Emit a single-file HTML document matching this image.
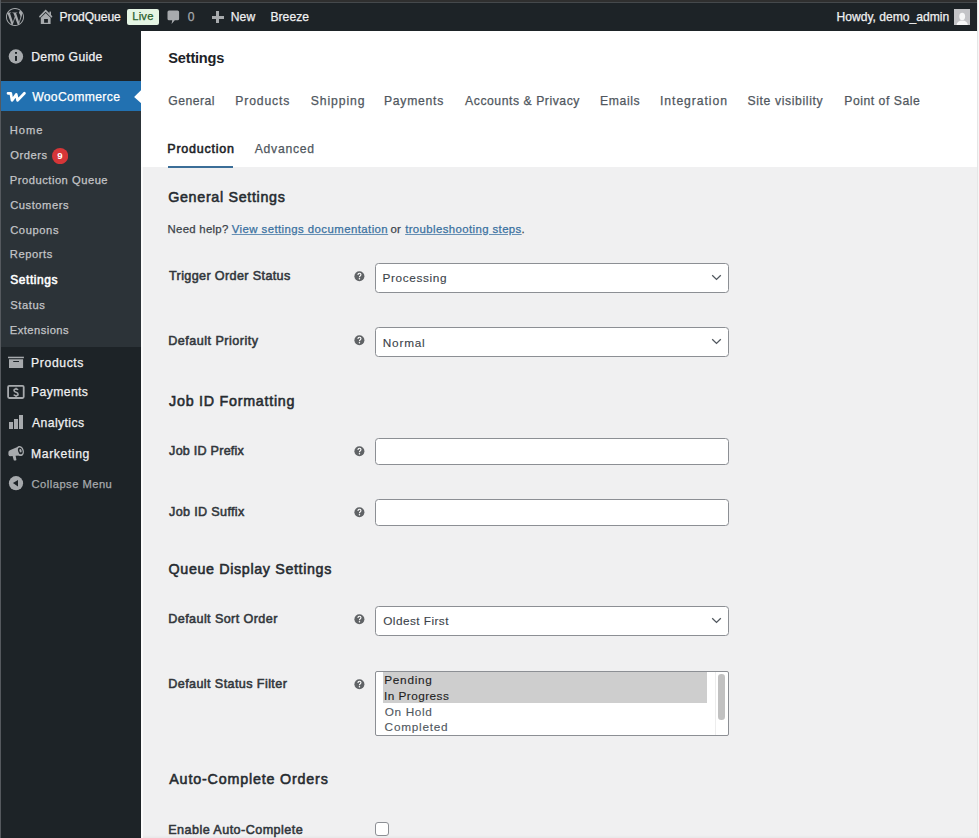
<!DOCTYPE html>
<html><head><meta charset="utf-8"><title>Settings &lsaquo; ProdQueue &mdash; WooCommerce</title>
<style>
html,body{margin:0;padding:0;width:979px;height:838px;overflow:hidden;background:#f0f0f1}
body{position:relative;font-family:"Liberation Sans",sans-serif}
.r{position:absolute;display:block}
.t{position:absolute;white-space:nowrap;line-height:1;font-family:"Liberation Sans",sans-serif;-webkit-text-stroke:0.25px currentColor}
</style></head><body>
<div class="r" style="left:0px;top:0px;width:979px;height:838px;background:#f0f0f1"></div>
<div class="r" style="left:141px;top:31px;width:836px;height:136px;background:#fff"></div>
<div class="r" style="left:0px;top:31px;width:141px;height:807px;background:#1d2327"></div>
<div class="r" style="left:0px;top:0px;width:979px;height:31px;background:#1d2327"></div>
<div class="r" style="left:0px;top:0px;width:979px;height:2px;background:#2f2f2f"></div>
<div class="r" style="left:0px;top:2px;width:979px;height:1px;background:#45494c"></div>
<div class="r" style="left:0px;top:0px;width:1px;height:838px;background:#55595e"></div>
<div class="r" style="left:977px;top:0px;width:1px;height:838px;background:#e6e6e6"></div>
<div class="r" style="left:978px;top:0px;width:1px;height:838px;background:#f7f7f7"></div>
<div class="r" style="left:0px;top:835px;width:979px;height:3px;background:linear-gradient(rgba(0,0,0,0),rgba(0,0,0,0.035))"></div>
<div class="r" style="left:141px;top:167px;width:2px;height:671px;background:#fbfbfb"></div>
<svg class="r" style="left:6px;top:8px" width="18" height="18" viewBox="0 0 24 24">
<path fill="#a7aaad" d="M21.469 6.825c.84 1.537 1.318 3.3 1.318 5.175 0 3.979-2.156 7.456-5.363 9.325l3.295-9.527c.615-1.54.82-2.771.82-3.864 0-.405-.026-.78-.07-1.11m-7.981.105c.647-.03 1.232-.105 1.232-.105.582-.075.514-.93-.067-.899 0 0-1.755.135-2.88.135-1.064 0-2.85-.15-2.85-.15-.585-.03-.661.855-.075.885 0 0 .54.061 1.125.09l1.68 4.605-2.37 7.08L5.354 6.9c.649-.03 1.234-.1 1.234-.1.585-.075.516-.93-.065-.896 0 0-1.746.138-2.874.138-.2 0-.438-.008-.69-.015C4.911 3.15 8.235 1.215 12 1.215c2.809 0 5.365 1.072 7.286 2.833-.046-.003-.091-.009-.141-.009-1.06 0-1.812.923-1.812 1.914 0 .89.513 1.643 1.06 2.531.411.72.89 1.643.89 2.977 0 .915-.354 1.994-.821 3.479l-1.075 3.585-3.9-11.61.001.014zM12 22.784c-1.059 0-2.081-.153-3.048-.437l3.237-9.406 3.315 9.087c.024.053.05.101.078.149-1.12.393-2.325.609-3.582.609M1.211 12c0-1.564.336-3.05.935-4.39L7.29 21.709C3.694 19.96 1.212 16.271 1.211 12M12 0C5.385 0 0 5.385 0 12s5.385 12 12 12 12-5.385 12-12S18.615 0 12 0"/>
</svg>
<svg class="r" style="left:38px;top:8px" width="16" height="18" viewBox="0 0 16 18">
<path d="M1.9 8.6 L7.7 2.6 L13.5 8.6" fill="none" stroke="#a7aaad" stroke-width="1.6" stroke-linecap="round"/>
<rect x="11.4" y="3.6" width="1.6" height="3.6" fill="#a7aaad"/>
<path d="M2.8 9.8 L7.7 5.0 L12.6 9.8 L12.6 16 L2.8 16 Z M6.1 11.0 L9.9 11.0 L9.9 14.7 L6.1 14.7 Z" fill="#a7aaad" fill-rule="evenodd"/>
</svg>
<div class="t" style="left:59.50px;top:11.20px;font-size:12.1px;color:#f0f0f1;letter-spacing:-0.069px;">ProdQueue</div>
<div class="r" style="left:127.2px;top:8.9px;width:31.9px;height:16.1px;background:#e5f5e4;border-radius:2px"></div>
<div class="t" style="left:132.28px;top:11.00px;font-size:11.2px;color:#2a5f2c;letter-spacing:0.192px;">Live</div>
<svg class="r" style="left:166px;top:9px" width="16" height="17" viewBox="0 0 16 17">
<path d="M3.0 1.6 L11.6 1.6 Q13.1 1.6 13.1 3.1 L13.1 9.8 Q13.1 11.3 11.6 11.3 L8.8 11.3 L5.6 15.0 L6.2 11.3 L3.0 11.3 Q1.5 11.3 1.5 9.8 L1.5 3.1 Q1.5 1.6 3.0 1.6 Z" fill="#a7aaad"/>
</svg>
<div class="t" style="left:187.82px;top:11.10px;font-size:12.1px;color:#a7aaad;">0</div>
<div class="r" style="left:211.7px;top:16.1px;width:12.1px;height:2.8px;background:#a7aaad"></div>
<div class="r" style="left:216.2px;top:11.0px;width:2.9px;height:12.0px;background:#a7aaad"></div>
<div class="t" style="left:230.70px;top:11.20px;font-size:12.1px;color:#f0f0f1;letter-spacing:0.184px;">New</div>
<div class="t" style="left:270.40px;top:11.20px;font-size:12.1px;color:#f0f0f1;letter-spacing:0.057px;">Breeze</div>
<div class="t" style="left:836.60px;top:11.30px;font-size:12.1px;color:#f0f0f1;letter-spacing:-0.012px;">Howdy, demo_admin</div>
<svg class="r" style="left:954px;top:9px" width="16" height="16" viewBox="0 0 16 16">
<rect width="16" height="16" fill="#c3c4c7"/>
<ellipse cx="8.2" cy="7.4" rx="2.9" ry="3.6" fill="#f6f7f7"/>
<path d="M2.5 16 Q3.2 11.8 8.2 11.6 Q13.2 11.8 13.9 16 Z" fill="#f6f7f7"/>
</svg>
<svg class="r" style="left:8px;top:49px" width="16" height="16" viewBox="0 0 16 16">
<circle cx="7.9" cy="7.5" r="7.2" fill="#a7aaad"/>
<rect x="7.0" y="3.0" width="2" height="1.8" fill="#1d2327"/>
<rect x="7.0" y="7.0" width="2" height="4.9" fill="#1d2327"/>
</svg>
<div class="t" style="left:31.19px;top:50.60px;font-size:12.2px;color:#f0f0f1;letter-spacing:0.306px;">Demo Guide</div>
<div class="r" style="left:1px;top:81px;width:140px;height:30px;background:#2271b1"></div>
<svg class="r" style="left:6px;top:90px" width="20" height="14" viewBox="0 0 20 14">
<path d="M2.0 3.3 L4.8 3.3 L6.0 10.4 L10.2 4.4 L11.6 10.4 L18.4 3.2" fill="none" stroke="#fff" stroke-width="2.7" stroke-linejoin="round" stroke-linecap="round"/>
</svg>
<div class="t" style="left:32.14px;top:91.20px;font-size:12.2px;color:#fff;letter-spacing:0.336px;">WooCommerce</div>
<svg class="r" style="left:133px;top:88px" width="9" height="17" viewBox="0 0 9 17"><path d="M9 1.2 L1.1 8.9 L9 16 Z" fill="#fff"/></svg>
<div class="r" style="left:1px;top:111px;width:140px;height:236px;background:#2c3338"></div>
<div class="t" style="left:9.78px;top:124.70px;font-size:11.2px;color:#c3c4c7;letter-spacing:0.975px;">Home</div>
<div class="t" style="left:10.17px;top:150.30px;font-size:11.2px;color:#c3c4c7;letter-spacing:0.542px;">Orders</div>
<svg class="r" style="left:52px;top:147.7px" width="16.2" height="16.2" viewBox="0 0 16 16"><circle cx="8" cy="8" r="8" fill="#d63638"/></svg>
<div class="t" style="left:57.36px;top:151.40px;font-size:9.6px;color:#fff;font-weight:700;-webkit-text-stroke:0;">9</div>
<div class="t" style="left:9.78px;top:175.30px;font-size:11.2px;color:#c3c4c7;letter-spacing:0.509px;">Production Queue</div>
<div class="t" style="left:10.14px;top:199.80px;font-size:11.2px;color:#c3c4c7;letter-spacing:0.538px;">Customers</div>
<div class="t" style="left:10.14px;top:224.90px;font-size:11.2px;color:#c3c4c7;letter-spacing:0.604px;">Coupons</div>
<div class="t" style="left:9.78px;top:249.40px;font-size:11.2px;color:#c3c4c7;letter-spacing:0.565px;">Reports</div>
<div class="t" style="left:10.16px;top:275.00px;font-size:11.97px;color:#fff;-webkit-text-stroke:0.55px currentColor;letter-spacing:0.588px;">Settings</div>
<div class="t" style="left:10.20px;top:299.90px;font-size:11.2px;color:#c3c4c7;letter-spacing:0.589px;">Status</div>
<div class="t" style="left:9.78px;top:324.70px;font-size:11.2px;color:#c3c4c7;letter-spacing:0.458px;">Extensions</div>
<svg class="r" style="left:7px;top:355px" width="18" height="14" viewBox="0 0 18 14">
<rect x="1" y="1.7" width="15.9" height="1.5" fill="#a7aaad"/>
<path d="M2 4.3 L16.1 4.3 L16.1 12.9 L2 12.9 Z M6.2 6.0 L12 6.0 L12 7.0 L6.2 7.0 Z" fill="#a7aaad" fill-rule="evenodd"/>
</svg>
<div class="t" style="left:31.09px;top:356.50px;font-size:12.2px;color:#f0f0f1;letter-spacing:0.611px;">Products</div>
<svg class="r" style="left:6px;top:384px" width="20" height="16" viewBox="0 0 20 16">
<rect x="2.1" y="1.8" width="15.6" height="12.2" rx="1.2" fill="none" stroke="#a7aaad" stroke-width="1.8"/>
<path d="M12.0 6.0 Q11.5 5.0 10.0 5.0 Q8.0 5.0 8.0 6.6 Q8.0 7.9 10.0 8.2 Q12.1 8.6 12.1 10.2 Q12.1 11.7 10.0 11.7 Q8.4 11.7 7.8 10.7 M10.05 3.7 V5.0 M10.05 11.7 V13.0" fill="none" stroke="#a7aaad" stroke-width="1.5"/>
</svg>
<div class="t" style="left:31.09px;top:386.40px;font-size:12.2px;color:#f0f0f1;letter-spacing:0.382px;">Payments</div>
<div class="r" style="left:8.9px;top:421.9px;width:3.7px;height:7.2px;background:#a7aaad"></div>
<div class="r" style="left:14.0px;top:419.2px;width:3.9px;height:9.9px;background:#a7aaad"></div>
<div class="r" style="left:19.2px;top:414.9px;width:3.9px;height:14.2px;background:#a7aaad"></div>
<div class="t" style="left:32.07px;top:416.60px;font-size:12.2px;color:#f0f0f1;letter-spacing:0.403px;">Analytics</div>
<svg class="r" style="left:6px;top:444px" width="20" height="19" viewBox="0 0 20 19">
<path d="M2.4 8.6 Q2.2 6.6 4.4 6.0 L12.6 2.4 L15.2 11.4 L9.6 11.8 L10.4 15.8 Q10.5 16.6 9.6 16.6 L8.5 16.6 Q7.9 16.6 7.7 16.0 L6.6 12.1 L4.6 12.3 Q2.6 12.3 2.4 10.4 Z" fill="#a7aaad"/>
<ellipse cx="14.2" cy="7.0" rx="3.6" ry="5.1" transform="rotate(-16 14.2 7)" fill="#a7aaad"/>
<ellipse cx="14.3" cy="6.9" rx="2.2" ry="3.5" transform="rotate(-16 14.3 6.9)" fill="#1d2327"/>
<ellipse cx="14.5" cy="6.8" rx="1.1" ry="1.8" transform="rotate(-16 14.5 6.8)" fill="#a7aaad"/>
</svg>
<div class="t" style="left:31.09px;top:448.00px;font-size:12.2px;color:#f0f0f1;letter-spacing:0.589px;">Marketing</div>
<svg class="r" style="left:8px;top:475px" width="16" height="16" viewBox="0 0 16 16">
<circle cx="8" cy="8.2" r="7.1" fill="#a7aaad"/>
<path d="M4.9 8.0 L10.0 5.0 L10.0 11.6 Z" fill="#1d2327"/>
</svg>
<div class="t" style="left:31.54px;top:478.60px;font-size:11.2px;color:#a7aaad;letter-spacing:0.474px;">Collapse Menu</div>
<div class="t" style="left:168.36px;top:51.00px;font-size:14.6px;color:#1d2327;font-weight:700;-webkit-text-stroke:0;letter-spacing:-0.225px;">Settings</div>
<div class="t" style="left:168.19px;top:95.00px;font-size:12.2px;color:#50575e;letter-spacing:0.489px;">General</div>
<div class="t" style="left:235.29px;top:95.00px;font-size:12.2px;color:#50575e;letter-spacing:0.839px;">Products</div>
<div class="t" style="left:310.85px;top:95.00px;font-size:12.2px;color:#50575e;letter-spacing:0.879px;">Shipping</div>
<div class="t" style="left:383.99px;top:95.00px;font-size:12.2px;color:#50575e;letter-spacing:0.725px;">Payments</div>
<div class="t" style="left:465.07px;top:95.00px;font-size:12.2px;color:#50575e;letter-spacing:0.550px;">Accounts &amp; Privacy</div>
<div class="t" style="left:600.09px;top:95.00px;font-size:12.2px;color:#50575e;letter-spacing:0.607px;">Emails</div>
<div class="t" style="left:660.07px;top:95.00px;font-size:12.2px;color:#50575e;letter-spacing:0.925px;">Integration</div>
<div class="t" style="left:747.45px;top:95.00px;font-size:12.2px;color:#50575e;letter-spacing:0.632px;">Site visibility</div>
<div class="t" style="left:844.29px;top:95.00px;font-size:12.2px;color:#50575e;letter-spacing:0.529px;">Point of Sale</div>
<div class="t" style="left:167.37px;top:143.00px;font-size:12.5px;color:#1d2327;-webkit-text-stroke:0.55px currentColor;letter-spacing:0.751px;">Production</div>
<div class="t" style="left:254.77px;top:143.00px;font-size:12.2px;color:#50575e;letter-spacing:0.719px;">Advanced</div>
<div class="r" style="left:168.2px;top:165.8px;width:65px;height:2.2px;background:#3b6e98"></div>
<div class="t" style="left:168.19px;top:189.90px;font-size:14.3px;color:#262b30;-webkit-text-stroke:0.55px currentColor;letter-spacing:0.679px;">General Settings</div>
<div class="t" style="left:167.56px;top:223.50px;font-size:11.4px;color:#3c434a;letter-spacing:0.270px;">Need help?</div>
<div class="t" style="left:231.74px;top:223.50px;font-size:11.4px;color:#3a70a0;letter-spacing:0.430px;text-decoration:underline;text-decoration-color:rgba(58,112,160,0.75);text-underline-offset:0.8px">View settings documentation</div>
<div class="t" style="left:390.52px;top:223.50px;font-size:11.4px;color:#3c434a;letter-spacing:0.238px;">or</div>
<div class="t" style="left:405.13px;top:223.50px;font-size:11.4px;color:#3a70a0;letter-spacing:0.394px;text-decoration:underline;text-decoration-color:rgba(58,112,160,0.75);text-underline-offset:0.8px">troubleshooting steps</div>
<div class="t" style="left:521.57px;top:223.50px;font-size:11.4px;color:#3c434a;">.</div>
<div class="t" style="left:169.02px;top:270.00px;font-size:12.6px;color:#32373c;-webkit-text-stroke:0.55px currentColor;letter-spacing:0.366px;">Trigger Order Status</div>
<svg class="r" style="left:354px;top:270.5px" width="11" height="11" viewBox="0 0 11 11">
<circle cx="5.4" cy="5.3" r="5.0" fill="#606366"/>
<path d="M3.95 4.0 Q3.95 2.2 5.45 2.2 Q6.95 2.2 6.95 3.6 Q6.95 4.4 6.1 4.9 Q5.45 5.3 5.45 6.3" fill="none" stroke="#fff" stroke-width="1.15"/>
<circle cx="5.45" cy="7.85" r="0.75" fill="#fff"/>
</svg>
<div class="r" style="left:375px;top:263px;width:354px;height:30px;background:#fff;border:1px solid #8c8f94;border-radius:3.5px;box-sizing:border-box"></div>
<svg class="r" style="left:711px;top:273.8px" width="11" height="7" viewBox="0 0 11 7"><path d="M1.2 1.2 L5.5 5.4 L9.8 1.2" fill="none" stroke="#50575e" stroke-width="1.3"/></svg>
<div class="t" style="left:382.43px;top:272.70px;font-size:11.8px;color:#3c434a;letter-spacing:0.651px;-webkit-text-stroke:0.12px currentColor">Processing</div>
<div class="t" style="left:168.26px;top:334.50px;font-size:12.6px;color:#32373c;-webkit-text-stroke:0.55px currentColor;letter-spacing:0.476px;">Default Priority</div>
<svg class="r" style="left:354px;top:335.3px" width="11" height="11" viewBox="0 0 11 11">
<circle cx="5.4" cy="5.3" r="5.0" fill="#606366"/>
<path d="M3.95 4.0 Q3.95 2.2 5.45 2.2 Q6.95 2.2 6.95 3.6 Q6.95 4.4 6.1 4.9 Q5.45 5.3 5.45 6.3" fill="none" stroke="#fff" stroke-width="1.15"/>
<circle cx="5.45" cy="7.85" r="0.75" fill="#fff"/>
</svg>
<div class="r" style="left:375px;top:327px;width:354px;height:30px;background:#fff;border:1px solid #8c8f94;border-radius:3.5px;box-sizing:border-box"></div>
<svg class="r" style="left:711px;top:337.8px" width="11" height="7" viewBox="0 0 11 7"><path d="M1.2 1.2 L5.5 5.4 L9.8 1.2" fill="none" stroke="#50575e" stroke-width="1.3"/></svg>
<div class="t" style="left:382.83px;top:337.80px;font-size:11.8px;color:#3c434a;letter-spacing:0.769px;-webkit-text-stroke:0.12px currentColor">Normal</div>
<div class="t" style="left:169.09px;top:393.80px;font-size:14.3px;color:#262b30;-webkit-text-stroke:0.55px currentColor;letter-spacing:0.735px;">Job ID Formatting</div>
<div class="t" style="left:169.11px;top:445.30px;font-size:12.6px;color:#32373c;-webkit-text-stroke:0.55px currentColor;letter-spacing:0.226px;">Job ID Prefix</div>
<svg class="r" style="left:354px;top:445.9px" width="11" height="11" viewBox="0 0 11 11">
<circle cx="5.4" cy="5.3" r="5.0" fill="#606366"/>
<path d="M3.95 4.0 Q3.95 2.2 5.45 2.2 Q6.95 2.2 6.95 3.6 Q6.95 4.4 6.1 4.9 Q5.45 5.3 5.45 6.3" fill="none" stroke="#fff" stroke-width="1.15"/>
<circle cx="5.45" cy="7.85" r="0.75" fill="#fff"/>
</svg>
<div class="r" style="left:375px;top:438px;width:354px;height:27px;background:#fff;border:1px solid #8c8f94;border-radius:3.5px;box-sizing:border-box"></div>
<div class="t" style="left:169.11px;top:506.20px;font-size:12.6px;color:#32373c;-webkit-text-stroke:0.55px currentColor;letter-spacing:0.330px;">Job ID Suffix</div>
<svg class="r" style="left:354px;top:507.2px" width="11" height="11" viewBox="0 0 11 11">
<circle cx="5.4" cy="5.3" r="5.0" fill="#606366"/>
<path d="M3.95 4.0 Q3.95 2.2 5.45 2.2 Q6.95 2.2 6.95 3.6 Q6.95 4.4 6.1 4.9 Q5.45 5.3 5.45 6.3" fill="none" stroke="#fff" stroke-width="1.15"/>
<circle cx="5.45" cy="7.85" r="0.75" fill="#fff"/>
</svg>
<div class="r" style="left:375px;top:499px;width:354px;height:27px;background:#fff;border:1px solid #8c8f94;border-radius:3.5px;box-sizing:border-box"></div>
<div class="t" style="left:168.62px;top:561.80px;font-size:14.3px;color:#262b30;-webkit-text-stroke:0.55px currentColor;letter-spacing:0.635px;">Queue Display Settings</div>
<div class="t" style="left:168.26px;top:613.10px;font-size:12.6px;color:#32373c;-webkit-text-stroke:0.55px currentColor;letter-spacing:0.405px;">Default Sort Order</div>
<svg class="r" style="left:354px;top:614.2px" width="11" height="11" viewBox="0 0 11 11">
<circle cx="5.4" cy="5.3" r="5.0" fill="#606366"/>
<path d="M3.95 4.0 Q3.95 2.2 5.45 2.2 Q6.95 2.2 6.95 3.6 Q6.95 4.4 6.1 4.9 Q5.45 5.3 5.45 6.3" fill="none" stroke="#fff" stroke-width="1.15"/>
<circle cx="5.45" cy="7.85" r="0.75" fill="#fff"/>
</svg>
<div class="r" style="left:375px;top:606px;width:354px;height:30px;background:#fff;border:1px solid #8c8f94;border-radius:3.5px;box-sizing:border-box"></div>
<svg class="r" style="left:711px;top:616.8px" width="11" height="7" viewBox="0 0 11 7"><path d="M1.2 1.2 L5.5 5.4 L9.8 1.2" fill="none" stroke="#50575e" stroke-width="1.3"/></svg>
<div class="t" style="left:383.24px;top:616.30px;font-size:11.8px;color:#3c434a;letter-spacing:0.447px;-webkit-text-stroke:0.12px currentColor">Oldest First</div>
<div class="t" style="left:168.26px;top:677.80px;font-size:12.6px;color:#32373c;-webkit-text-stroke:0.55px currentColor;letter-spacing:0.400px;">Default Status Filter</div>
<svg class="r" style="left:354px;top:678.8px" width="11" height="11" viewBox="0 0 11 11">
<circle cx="5.4" cy="5.3" r="5.0" fill="#606366"/>
<path d="M3.95 4.0 Q3.95 2.2 5.45 2.2 Q6.95 2.2 6.95 3.6 Q6.95 4.4 6.1 4.9 Q5.45 5.3 5.45 6.3" fill="none" stroke="#fff" stroke-width="1.15"/>
<circle cx="5.45" cy="7.85" r="0.75" fill="#fff"/>
</svg>
<div class="r" style="left:375px;top:671px;width:354px;height:65px;background:#fff;border:1px solid #8c8f94;border-radius:2px;box-sizing:border-box"></div>
<div class="r" style="left:383.4px;top:672.0px;width:323.6px;height:31.1px;background:#cecece"></div>
<div class="r" style="left:715.0px;top:672.3px;width:1px;height:62.5px;background:#ededed"></div>
<div class="r" style="left:718.2px;top:674.2px;width:6.6px;height:45.7px;background:#c1c1c1;border-radius:3.3px"></div>
<div class="t" style="left:384.23px;top:674.50px;font-size:11.8px;color:#1e1e1e;letter-spacing:0.734px;-webkit-text-stroke:0.12px currentColor">Pending</div>
<div class="t" style="left:384.11px;top:690.50px;font-size:11.8px;color:#1e1e1e;letter-spacing:0.438px;-webkit-text-stroke:0.12px currentColor">In Progress</div>
<div class="t" style="left:384.64px;top:706.80px;font-size:11.8px;color:#50575e;letter-spacing:0.670px;-webkit-text-stroke:0.12px currentColor">On Hold</div>
<div class="t" style="left:384.61px;top:722.30px;font-size:11.8px;color:#50575e;letter-spacing:0.747px;-webkit-text-stroke:0.12px currentColor">Completed</div>
<div class="t" style="left:169.26px;top:772.30px;font-size:14.3px;color:#262b30;-webkit-text-stroke:0.55px currentColor;letter-spacing:0.819px;">Auto-Complete Orders</div>
<div class="t" style="left:168.26px;top:823.90px;font-size:12.6px;color:#32373c;-webkit-text-stroke:0.55px currentColor;letter-spacing:0.443px;">Enable Auto-Complete</div>
<div class="r" style="left:375px;top:822px;width:14px;height:14px;background:#fff;border:1px solid #8c8f94;border-radius:3px;box-sizing:border-box"></div>
</body></html>
